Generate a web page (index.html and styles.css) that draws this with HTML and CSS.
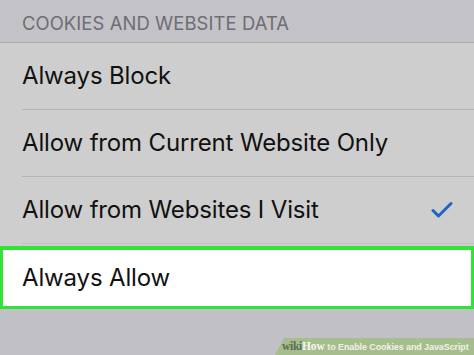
FILE: index.html
```html
<!DOCTYPE html>
<html>
<head>
<meta charset="utf-8">
<link rel="stylesheet" href="styles.css">
</head>
<body>
<div class="screen">
  <div class="section-header">COOKIES AND WEBSITE DATA</div>
  <div class="list">
    <div class="row"><span class="label">Always Block</span></div>
    <div class="row"><span class="label">Allow from Current Website Only</span></div>
    <div class="row"><span class="label">Allow from Websites I Visit</span>
      <svg class="check" width="22" height="17" viewBox="0 0 22 17"><path d="M2 9.5 L7.5 15 L20 2.5" fill="none" stroke="#1d63c8" stroke-width="3" stroke-linecap="round" stroke-linejoin="round"/></svg>
    </div>
    <div class="row selected"><span class="label">Always Allow</span></div>
  </div>
  <div class="footer">
    <div class="watermark"><span class="wiki">wiki</span><span class="how">How</span><span class="title"> to Enable Cookies and JavaScript</span></div>
  </div>
</div>
</body>
</html>
```

FILE: styles.css
```css
html, body {
  margin: 0;
  padding: 0;
}
body {
  width: 474px;
  height: 355px;
  overflow: hidden;
  background: #c2c1c6;
  font-family: "Inter", "Liberation Sans", sans-serif;
}
.screen {
  display: flex;
  flex-direction: column;
  height: 355px;
}
.section-header {
  height: 43px;
  box-sizing: border-box;
  padding: 12px 0 0 22px;
  font-size: 18.4px;
  color: #6e6d73;
  letter-spacing: 0.1px;
  background: #c3c2c7;
  border-bottom: 1px solid #a9a8ad;
}
.list {
  background: #cecece;
  display: flex;
  flex-direction: column;
}
.row {
  height: 67px;
  margin-left: 22px;
  border-bottom: 1px solid #b3b3b3;
  display: flex;
  align-items: center;
  justify-content: space-between;
  font-size: 24px;
  color: #111;
  padding-bottom: 1px;
  box-sizing: border-box;
  padding-right: 21px;
}
.row .label {
  letter-spacing: -0.15px;
}
.row.selected {
  margin-left: 0;
  height: 63px;
  background: #ffffff;
  border: 3px solid #31e332;
  border-top-width: 4px;
  padding-left: 19px;
  margin-top: 2px;
}
.list .row:nth-child(3) {
  border-bottom-color: #c2bcc4;
}
.footer {
  flex: 1;
  background: #c1c0c6;
  position: relative;
}
.watermark {
  position: absolute;
  right: 0;
  bottom: 0;
  height: 17px;
  width: 199px;
  background: #a6bd8d;
  clip-path: polygon(9px 0, 100% 0, 100% 100%, 0 100%);
  font-family: "Liberation Sans", sans-serif;
  font-size: 9px;
  font-weight: bold;
  line-height: 17px;
  white-space: nowrap;
  padding-left: 7px;
  box-sizing: border-box;
  overflow: hidden;
}
.wiki {
  font-family: "Liberation Serif", serif;
  color: #5d6a52;
  font-size: 11.5px;
  letter-spacing: -0.3px;
}
.how {
  font-family: "Liberation Serif", serif;
  color: #f4f7ef;
  font-size: 11.5px;
}
.title {
  color: #eef3e6;
  letter-spacing: -0.1px;
}
```
